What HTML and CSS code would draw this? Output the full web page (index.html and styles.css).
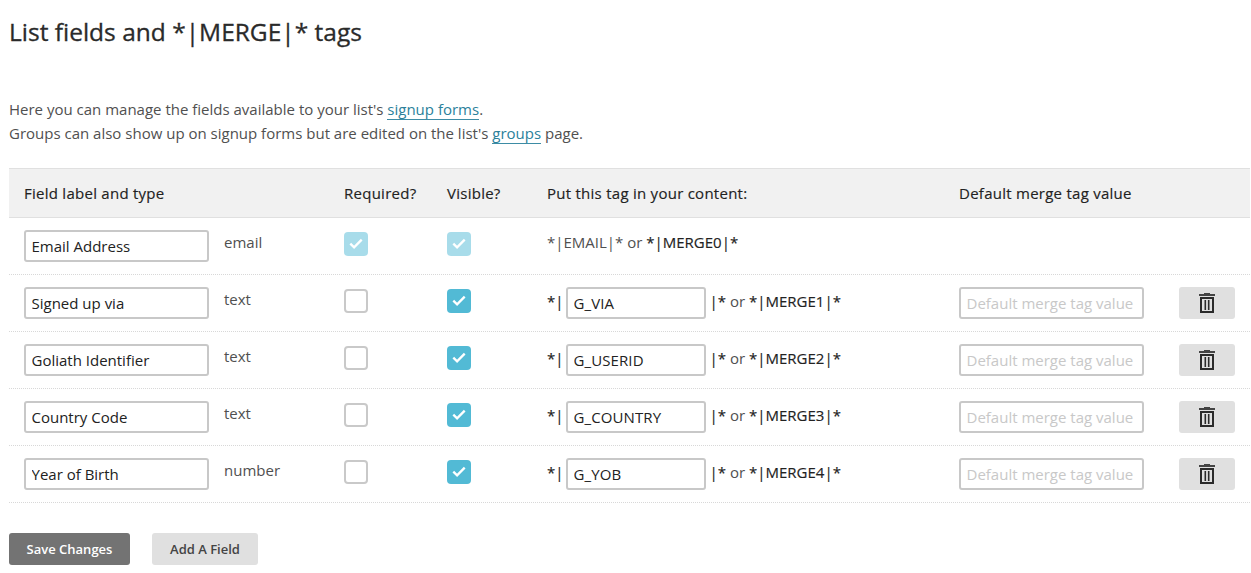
FILE: index.html
```html
<!DOCTYPE html>
<html lang="en">
<head>
<meta charset="utf-8">
<title>List fields and merge tags</title>
<link rel="stylesheet" href="styles.css">
</head>
<body>
<svg class="defs" width="0" height="0" aria-hidden="true">
  <symbol id="trash" viewBox="0 0 16 20">
    <path class="trash-lid" d="M0 2H16M5 .7H11" />
    <path class="trash-can" d="M2 5V19H14V5Z" />
    <path class="trash-bar" d="M6.3 7V17M9.7 7V17" />
  </symbol>
  <symbol id="check" viewBox="0 0 24 24">
    <path class="tick" d="M6.3 11.6L10.1 15.4L17.7 7.6" />
  </symbol>
</svg>
<main class="page">
  <h1 class="title">List fields and *|MERGE|* tags</h1>
  <p class="intro">Here you can manage the fields available to your list's <a class="link" href="#">signup forms</a>.<br>Groups can also show up on signup forms but are edited on the list's <a class="link" href="#">groups</a> page.</p>
  <section class="table">
    <div class="row head"><div>Field label and type</div><div>Required?</div><div>Visible?</div><div>Put this tag in your content:</div><div>Default merge tag value</div><div></div></div>
    <div class="row">
      <div class="field"><input class="input" value="Email Address"><span class="type">email</span></div>
      <div><span class="box on dim"><svg><use href="#check"/></svg></span></div>
      <div><span class="box on dim"><svg><use href="#check"/></svg></span></div>
      <div class="tag plain"><span>*|EMAIL|* or <b>*|MERGE0|*</b></span></div>
      <div></div><div></div>
    </div>
    <div class="row">
      <div class="field"><input class="input" value="Signed up via"><span class="type">text</span></div>
      <div><span class="box"></span></div>
      <div><span class="box on"><svg><use href="#check"/></svg></span></div>
      <div class="tag"><b>*|</b><input class="input short" value="G_VIA"><span><b>|*</b> or <b>*|MERGE1|*</b></span></div>
      <div><input class="input" placeholder="Default merge tag value"></div>
      <div><button class="delete" aria-label="Delete"><svg><use href="#trash"/></svg></button></div>
    </div>
    <div class="row">
      <div class="field"><input class="input" value="Goliath Identifier"><span class="type">text</span></div>
      <div><span class="box"></span></div>
      <div><span class="box on"><svg><use href="#check"/></svg></span></div>
      <div class="tag"><b>*|</b><input class="input short" value="G_USERID"><span><b>|*</b> or <b>*|MERGE2|*</b></span></div>
      <div><input class="input" placeholder="Default merge tag value"></div>
      <div><button class="delete" aria-label="Delete"><svg><use href="#trash"/></svg></button></div>
    </div>
    <div class="row">
      <div class="field"><input class="input" value="Country Code"><span class="type">text</span></div>
      <div><span class="box"></span></div>
      <div><span class="box on"><svg><use href="#check"/></svg></span></div>
      <div class="tag"><b>*|</b><input class="input short" value="G_COUNTRY"><span><b>|*</b> or <b>*|MERGE3|*</b></span></div>
      <div><input class="input" placeholder="Default merge tag value"></div>
      <div><button class="delete" aria-label="Delete"><svg><use href="#trash"/></svg></button></div>
    </div>
    <div class="row">
      <div class="field"><input class="input" value="Year of Birth"><span class="type">number</span></div>
      <div><span class="box"></span></div>
      <div><span class="box on"><svg><use href="#check"/></svg></span></div>
      <div class="tag"><b>*|</b><input class="input short" value="G_YOB"><span><b>|*</b> or <b>*|MERGE4|*</b></span></div>
      <div><input class="input" placeholder="Default merge tag value"></div>
      <div><button class="delete" aria-label="Delete"><svg><use href="#trash"/></svg></button></div>
    </div>
  </section>
  <div class="actions"><button class="btn primary">Save Changes</button><button class="btn">Add A Field</button></div>
</main>
</body>
</html>
```
FILE: styles.css
```css
* { box-sizing: border-box; }
body { margin: 0; background: #fff; color: #505050; font: 400 15px/24px "Open Sans", sans-serif; overflow: hidden; }
.defs { display: none; }
.page { padding: 14px 1px 0 9px; }
.title { margin: 0 0 47px; color: #2a2a2a; font-size: 24.5px; line-height: 36px; font-weight: 500; letter-spacing: 0; -webkit-text-stroke: .3px #2a2a2a; }
.intro { margin: 0 0 23px; white-space: nowrap; }
.link { color: #2b819b; text-decoration: none; border-bottom: 1px solid #3d8ca5; }
.row { display: grid; grid-template-columns: 320px 103px 100px 412px 220px 86px; height: 57px; border-bottom: 1px dotted #d8d8d8; }
.row > div { padding: 12px 0 0 15px; white-space: nowrap; }
.head { height: 50px; background: #f1f1f1; border-top: 1px solid #e0e0e0; border-bottom: 1px solid #e0e0e0; color: #222; font-weight: 500; letter-spacing: .26px; -webkit-text-stroke: .15px #222; }
.field { display: flex; gap: 15px; }
.input { display: block; width: 185px; height: 32px; padding: 0 5.5px; border: 2px solid #c8c8c8; border-radius: 3px; background: #fff; color: #222; font: inherit; letter-spacing: 0; outline: 0; }
.input::placeholder { color: #c8c8c8; opacity: 1; }
.box { display: block; width: 24px; height: 24px; margin-top: 2px; border: 2px solid #c9c9c9; border-radius: 4px; }
.on { border: 0; background: #52bad5; }
.dim { background: #a8dcea; }
.box svg { display: block; width: 24px; height: 24px; }
.tick { fill: none; stroke: #fff; stroke-width: 2.3; }
.tag { display: flex; line-height: 28px; }
.short { width: 140px; margin: 0 4px 0 2px; padding-left: 6px; letter-spacing: .1px; }
.plain { line-height: 24px; }
.tag b { font-weight: 500; color: #222; -webkit-text-stroke: .15px #222; }
.delete { display: flex; align-items: center; justify-content: center; width: 56px; height: 32px; padding: 0; border: 0; border-radius: 3px; background: #e0e0e0; }
.delete svg { width: 16px; height: 20px; }
.trash-lid, .trash-can, .trash-bar { fill: none; stroke: #2b2b2b; }
.trash-lid { stroke: #444; stroke-width: 1.8; }
.trash-can { stroke-width: 2; }
.trash-bar { stroke-width: 1.6; }
.actions { display: flex; gap: 22px; margin-top: 30px; }
.btn { width: 106px; height: 32px; padding: 0; border: 0; border-radius: 3px; background: #e0e0e0; color: #444; font: 600 13px/32px "Open Sans", sans-serif; }
.primary { width: 121px; background: #737373; color: #fff; }
```
